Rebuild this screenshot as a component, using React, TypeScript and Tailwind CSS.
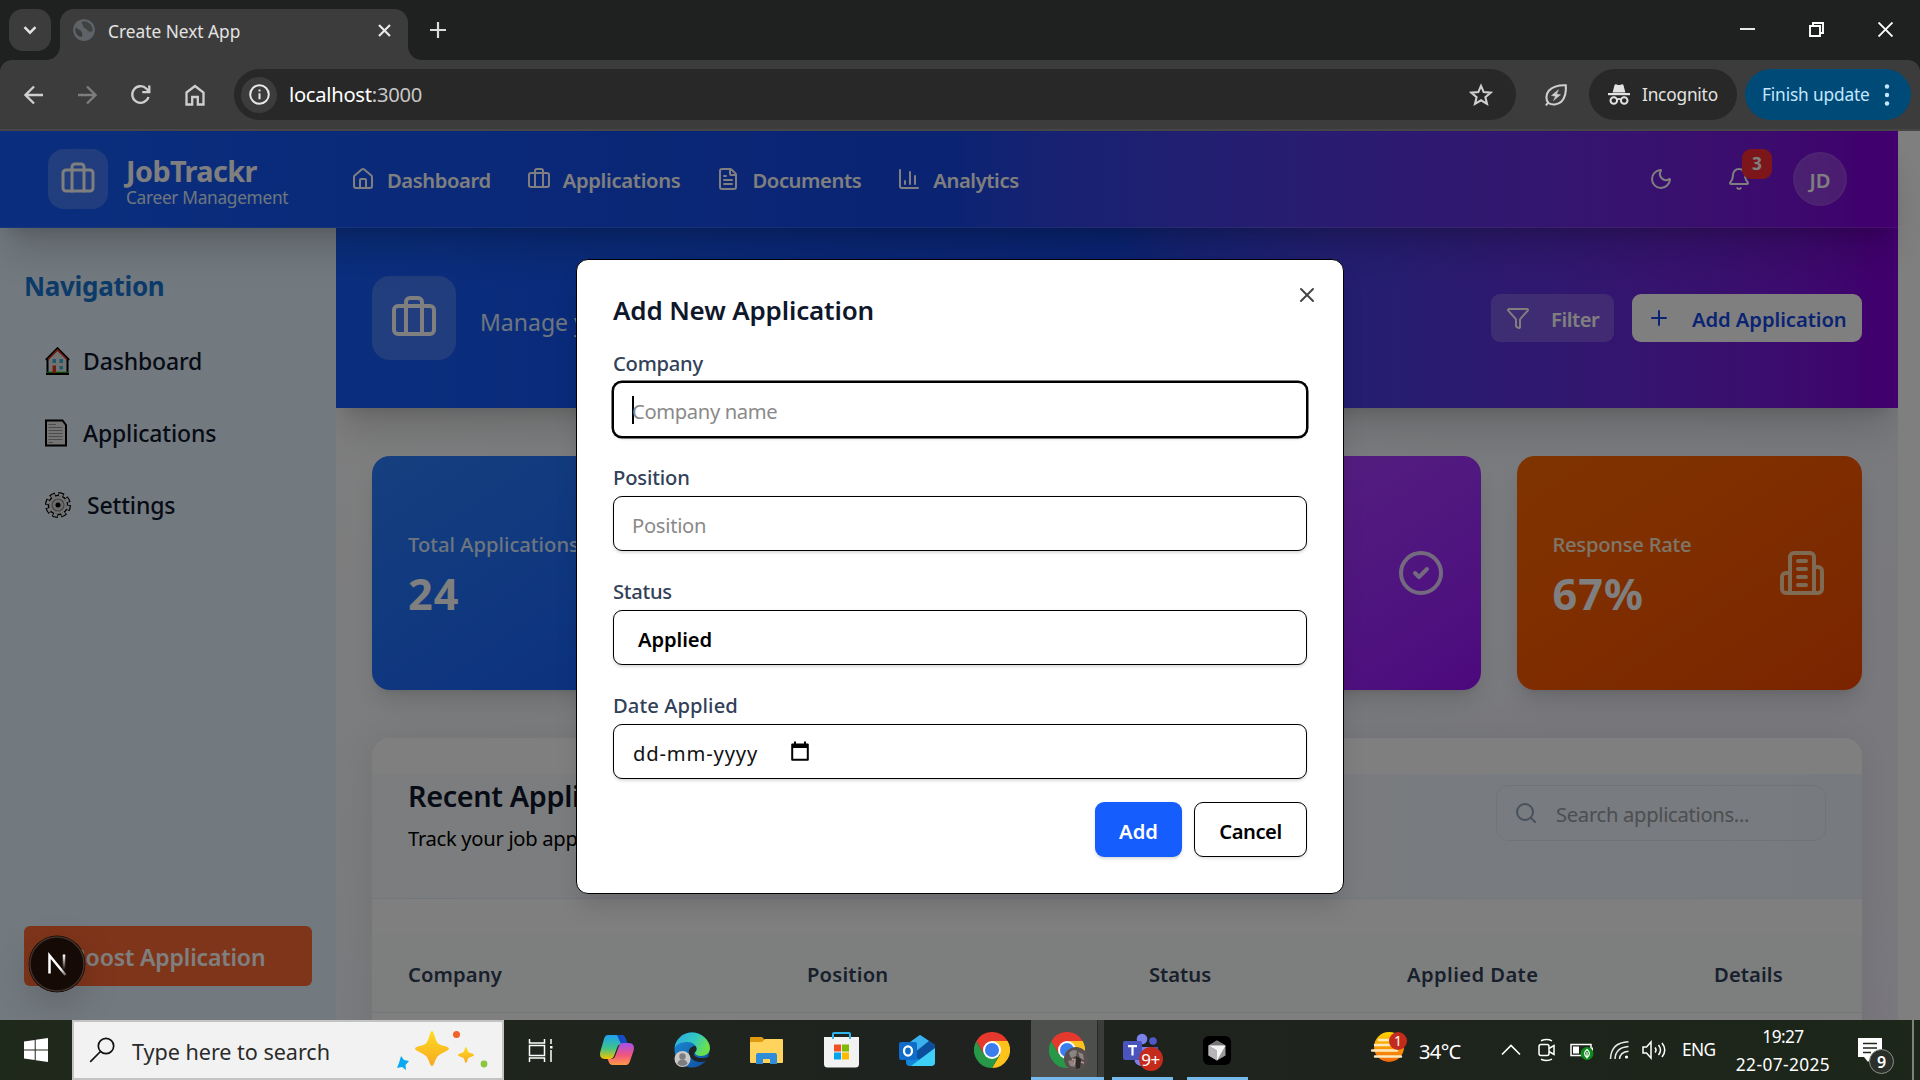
import type { ReactNode } from "react";
import {
  Bell,
  Briefcase,
  ChartColumn,
  CircleCheck,
  FileText,
  Funnel,
  House,
  Moon,
  Plus,
  Search,
  X,
} from "lucide-react";

/* ---------- Browser window ---------- */

function TabStrip() {
  return (
    <div className="flex h-[60px] bg-[#1f2020] pt-[9px] pl-[9px]">
      <div className="flex h-[42px] w-[42px] items-center justify-center rounded-[14px] bg-[#3c3c3c]">
        <svg className="size-[14px]" viewBox="0 0 14 14" fill="none" stroke="#e3e3e3" strokeWidth="2.4">
          <path d="M1.5 4.2 7 9.7l5.500-5.500" />
        </svg>
      </div>
      <div className="relative ml-[9px] flex h-[51px] w-[348px] items-start rounded-t-[14px] bg-[#3c3c3c] pt-[10px] pl-[13px]">
        <svg className="absolute bottom-0 -left-[14px] size-[14px]" viewBox="0 0 14 14" fill="#3c3c3c">
          <path d="M14 0v14H0A14 14 0 0 0 14 0Z" />
        </svg>
        <svg className="absolute -right-[14px] bottom-0 size-[14px]" viewBox="0 0 14 14" fill="#3c3c3c">
          <path d="M0 0v14h14A14 14 0 0 1 0 0Z" />
        </svg>
        <svg className="size-[22px]" viewBox="0 0 22 22">
          <circle cx="11" cy="11" r="10.500" fill="#5f6368" />
          <path d="M3 8c1 3 4 2 5 4s2 3 1 6c-3 0-7-3-7-8Z" fill="#3c3c3c" />
          <path d="M9 2c-1 3 1 3 1 5s3 2 4 4 4 2 6 1c0-5-3-9-8-10-1 0-2 0-3 0Z" fill="#3c3c3c" opacity=".85" />
          <circle cx="11" cy="11" r="9.800" fill="none" stroke="#5f6368" strokeWidth="2" />
        </svg>
        <span className="ml-[13px] w-[270px] pt-px text-[17.3px] leading-[24px] text-[#e3e3e3]">Create Next App</span>
        <svg className="mt-[5px] size-[13px] shrink-0" viewBox="0 0 13 13" stroke="#e8e8e8" strokeWidth="2.200">
          <path d="m1 1 11 11M12 1 1 12" />
        </svg>
      </div>
      <svg className="mt-[13px] ml-[22px] size-[16px]" viewBox="0 0 16 16" stroke="#dcdcdc" strokeWidth="2.200">
        <path d="M8 0v16M0 8h16" />
      </svg>
      <div className="mr-[27px] ml-auto flex gap-[54px] pt-[13px]">
        <svg className="size-[15px]" viewBox="0 0 15 15" stroke="#fff" strokeWidth="1.800">
          <path d="M0 7h15" />
        </svg>
        <svg className="size-[15px]" viewBox="0 0 15 15" fill="none" stroke="#fff" strokeWidth="1.900">
          <path d="M1 4h10v10H1zM4 4V1h10v10h-3" />
        </svg>
        <svg className="size-[15px]" viewBox="0 0 15 15" stroke="#fff" strokeWidth="1.900">
          <path d="m.5.5 14 14M14.500.5l-14 14" />
        </svg>
      </div>
    </div>
  );
}

function Toolbar() {
  return (
    <div className="bg-[#1f2020]">
      <div className="flex h-[71px] items-center rounded-t-[12px] border-b-2 border-[#464646] bg-[#3c3c3c] pl-[24px]">
        <svg className="size-[20px]" viewBox="0 0 20 20" fill="none" stroke="#cfcfcf" strokeWidth="2.300">
          <path d="M19 10H2M10 1.500 1.500 10l8.500 8.500" />
        </svg>
        <svg className="ml-[33px] size-[20px]" viewBox="0 0 20 20" fill="none" stroke="#7d7d7d" strokeWidth="2.300">
          <path d="M1 10h17M10 1.500l8.500 8.500-8.500 8.500" />
        </svg>
        <svg className="ml-[33px] size-[21px]" viewBox="0 0 21 21" fill="none" stroke="#cfcfcf" strokeWidth="2.300">
          <path d="M18.500 13a8.300 8.300 0 1 1-2-8.300L19 7.400" />
          <path d="M19.300 1.500v6.700h-7" />
        </svg>
        <svg className="ml-[33px] size-[22px]" viewBox="0 0 22 22" fill="none" stroke="#cfcfcf" strokeWidth="2.300">
          <path d="M2.500 8.500 11 2l8.500 6.500V20.500h-5.700v-7.500H8.200v7.500H2.500Z" />
        </svg>
        <div className="ml-[28px] flex h-[51px] w-[1282px] items-center rounded-full bg-[#282828] pl-[7px]">
          <div className="flex size-[36px] items-center justify-center rounded-full bg-[#3c3c3c]">
            <svg className="size-[21px]" viewBox="0 0 21 21" fill="none" stroke="#e8e8e8" strokeWidth="2">
              <circle cx="10.500" cy="10.500" r="9.300" />
              <path d="M10.500 9.300v6M10.500 5.500v2" />
            </svg>
          </div>
          <span className="ml-[12px] pb-px text-[20.2px] leading-[28px] tracking-[-0.014em] text-[#c7c7c7]">
            <span className="text-white">localhost</span>:3000
          </span>
          <svg className="mr-[23px] ml-auto size-[24px]" viewBox="0 0 24 24" fill="none" stroke="#cfcfcf" strokeWidth="2.100">
            <path d="m12 2.800 2.700 6.300 6.900.6-5.200 4.500 1.600 6.700-6-3.600-6 3.600 1.600-6.700-5.200-4.500 6.900-.6Z" />
          </svg>
        </div>
        <svg className="ml-[28px] size-[24px]" viewBox="0 0 24 24" fill="none" stroke="#cfcfcf" strokeWidth="2.100">
          <path d="M2 22.500c1-2 2-2.500 2.500-2.500m0 0C1.500 17 1.800 11 5 7.500S14 2 21.800 2.200c.6 7.800-.8 12.800-4.300 16.300s-9.500 4-13 1.500Z" />
          <path d="m14.500 6.800-7 5.700 4 .8-2 4.200 7-5.700-4-.8Z" fill="#cfcfcf" strokeWidth=".5" />
        </svg>
        <div className="ml-[21px] flex h-[51px] w-[148px] items-center rounded-full bg-[#282828] pl-[19px]">
          <svg className="size-[22px]" viewBox="0 0 22 22" fill="#e3e3e3">
            <path d="M6.500 1.200c.3-1 1.200-1.200 2-.8l1.700.7c.5.200 1.100.2 1.600 0l1.700-.7c.8-.4 1.700-.2 2 .8L17.400 8.500H4.600Z" />
            <path d="M0 9h22v2.200H0z" />
            <circle cx="5.800" cy="16.500" r="3.300" fill="none" stroke="#e3e3e3" strokeWidth="2" />
            <circle cx="16.200" cy="16.500" r="3.300" fill="none" stroke="#e3e3e3" strokeWidth="2" />
            <path d="M9 15.500q2-1.300 4 0" fill="none" stroke="#e3e3e3" strokeWidth="1.800" />
          </svg>
          <span className="ml-[12px] text-[17.3px] leading-[24px] tracking-[-0.012em] text-[#e3e3e3]">Incognito</span>
        </div>
        <div className="ml-[8px] flex h-[51px] w-[166px] items-center rounded-full bg-[#004a77] pl-[17px]">
          <span className="w-[121px] text-[17.3px] leading-[24px] tracking-[-0.009em] text-[#c2e7ff]">Finish update</span>
          <svg className="h-[22px] w-[8px]" viewBox="0 0 8 22" fill="#c2e7ff">
            <circle cx="4" cy="2.500" r="2.200" />
            <circle cx="4" cy="11" r="2.200" />
            <circle cx="4" cy="19.500" r="2.200" />
          </svg>
        </div>
      </div>
    </div>
  );
}

/* ---------- JobTrackr page ---------- */

const navLinks = [
  { label: "Dashboard", icon: House, text: "tracking-[-0.020em]" },
  { label: "Applications", icon: Briefcase, text: "tracking-[-0.015em]" },
  { label: "Documents", icon: FileText, text: "tracking-[-0.020em]" },
  { label: "Analytics", icon: ChartColumn, text: "tracking-[-0.020em]" },
];

function Header() {
  return (
    <header className="relative z-10 flex h-[97px] shrink-0 items-center border-b border-white/10 bg-linear-to-r from-blue-600 via-blue-700 to-purple-700 pl-[48px] text-white shadow-[0_30px_38px_-8px_rgba(0,0,0,0.17),0_12px_15px_-9px_rgba(0,0,0,0.15)]">
      <div className="flex size-[60px] items-center justify-center rounded-[16px] bg-white/20">
        <Briefcase className="size-[36px]" />
      </div>
      <div className="ml-[18px] flex w-[225px] flex-col pt-[8px] whitespace-nowrap">
        <span className="text-[28.8px] leading-[30px] font-bold tracking-[-0.020em]">JobTrackr</span>
        <span className="text-[17.3px] leading-[24px] tracking-[-0.018em] text-blue-100">Career Management</span>
      </div>
      <nav className="flex gap-[36px]">
        {navLinks.map(({ label, icon: Icon, text }) => (
          <a key={label} className="flex items-center gap-[12px]">
            <Icon className="size-[24px]" />
            <span className={`pt-[2px] text-[20.2px] leading-[28px] font-semibold ${text}`}>{label}</span>
          </a>
        ))}
      </nav>
      <div className="mr-[51px] ml-auto flex items-center">
        <Moon className="size-[24px]" />
        <div className="relative ml-[54px]">
          <Bell className="size-[24px]" />
          <span className="absolute -top-[18px] left-[15px] flex size-[30px] items-center justify-center rounded-[9px] bg-red-500 text-[17.3px] leading-none font-bold">
            3
          </span>
        </div>
        <div className="ml-[42px] flex size-[54px] items-center justify-center rounded-full border-2 border-white/5 bg-white/20 pt-[2px] text-[20.2px] font-semibold">
          JD
        </div>
      </div>
    </header>
  );
}

function HouseEmoji() {
  return (
    <svg className="h-[28px] w-[25px]" viewBox="0 0 25 28">
      <path d="M2.500 12 12.500 2l10 10v14h-20Z" fill="#e6e6e6" stroke="#000" strokeWidth="2" />
      <path d="m1 13 11.500-11.500L24 13" fill="none" stroke="#000" strokeWidth="2.400" />
      <path d="m3 12.500 9.500-9.500 9.500 9.500" fill="none" stroke="#e03a20" strokeWidth="1.600" />
      <path d="M7.500 12h3.500v4H7.500zM14.500 12H18v4h-3.500zM14.500 19H18v3.500h-3.500z" fill="#32b8dc" />
      <path d="M7.500 18.500H11V26H7.500z" fill="#e03a20" />
      <path d="M2 24.700h5.500v1.500H2zM11 24.700h12v1.500H11z" fill="#10a010" />
      <path d="M1 27h23" stroke="#000" strokeWidth="2" />
    </svg>
  );
}

function PageEmoji() {
  return (
    <svg className="h-[28px] w-[22px]" viewBox="0 0 22 28">
      <path d="M1 1.500h16.500L21 6v20.500H1Z" fill="#e8e8e8" stroke="#000" strokeWidth="2" />
      <path d="M3.500 5.500H11M3.500 8.500h14M3.500 11.500h14M3.500 14.500h14M3.500 17.500h14M3.500 20.500h14M3.500 23.500H8" stroke="#999" strokeWidth="1.200" />
    </svg>
  );
}

function GearEmoji() {
  return (
    <svg className="size-[26px]" viewBox="0 0 26 26">
      <circle cx="13" cy="13" r="11" fill="none" stroke="#000" strokeWidth="4" strokeDasharray="5.500 3.140" />
      <circle cx="13" cy="13" r="9.600" fill="#e4e4e4" stroke="#000" strokeWidth="1.400" />
      <circle cx="13" cy="13" r="10.200" fill="none" stroke="#e4e4e4" strokeWidth="3.200" strokeDasharray="3.800 4.211" strokeDashoffset="-.65" />
      <circle cx="13" cy="13" r="6" fill="#d4d4d4" stroke="#888" strokeWidth="1.200" />
      <circle cx="13" cy="13" r="2.500" fill="#000" />
    </svg>
  );
}

function SideItem({ icon, children, box }: { icon: ReactNode; children: string; box: string }) {
  return (
    <a className="flex h-[72px] items-center text-[#0f172a]">
      <span className={box}>{icon}</span>
      <span className="text-[23px] leading-[30px] font-medium tracking-[-0.007em]">{children}</span>
    </a>
  );
}

function Sidebar() {
  return (
    <aside className="flex w-[336px] flex-col bg-[#e4f3ff] px-[24px] pt-[40px] pb-[34px]">
      <h2 className="text-[26px] leading-[36px] font-bold tracking-[-0.012em] text-[#1976d2]">Navigation</h2>
      <div className="mt-[21px] flex flex-col pl-[21px]">
        <SideItem icon={<HouseEmoji />} box="w-[38px]">Dashboard</SideItem>
        <SideItem icon={<PageEmoji />} box="w-[38px]">Applications</SideItem>
        <SideItem icon={<GearEmoji />} box="w-[42px]">Settings</SideItem>
      </div>
      <button className="mt-auto flex h-[60px] items-center justify-center rounded-[6px] bg-[#ff6b35] pt-[2px] text-[23px] font-semibold tracking-[-0.006em] text-white">
        Boost Application
      </button>
    </aside>
  );
}

function Hero() {
  return (
    <section className="flex h-[180px] shrink-0 items-center bg-linear-to-r from-blue-600 via-blue-700 to-purple-700 px-[36px] text-white shadow-[0_30px_38px_-8px_rgba(0,0,0,0.14),0_12px_15px_-9px_rgba(0,0,0,0.14)]">
      <div className="flex size-[84px] items-center justify-center rounded-[18px] bg-white/20">
        <Briefcase className="size-[48px]" />
      </div>
      <p className="ml-[24px] pt-[8px] text-[23px] leading-[36px] whitespace-nowrap text-blue-100">
        Manage your applications
      </p>
      <div className="ml-auto flex gap-[18px] text-[20.2px] font-semibold">
        <button className="flex h-[48px] w-[123px] items-center rounded-[9px] bg-white/20 pl-[15px]">
          <Funnel className="size-[24px]" />
          <span className="ml-[21px] pt-[2px] tracking-[-0.022em]">Filter</span>
        </button>
        <button className="flex h-[48px] w-[230px] items-center rounded-[9px] bg-white pl-[15px] text-blue-700">
          <Plus className="size-[24px]" />
          <span className="ml-[21px] pt-[2px] whitespace-nowrap tracking-[-0.003em]">Add Application</span>
        </button>
      </div>
    </section>
  );
}

function OfficeBuilding({ className }: { className: string }) {
  return (
    <svg className={className} viewBox="0 0 24 24" fill="none" stroke="currentColor" strokeWidth="2" strokeLinecap="round" strokeLinejoin="round">
      <path d="M6 22V4a2 2 0 0 1 2-2h8a2 2 0 0 1 2 2v18Z" />
      <path d="M6 12H4a2 2 0 0 0-2 2v6a2 2 0 0 0 2 2h2" />
      <path d="M18 9h2a2 2 0 0 1 2 2v9a2 2 0 0 1-2 2h-2" />
      <path d="M10 6h4M10 10h4M10 14h4M10 18h4" />
    </svg>
  );
}

type StatProps = { label: string; value: string; card: string; tint: string; icon: ReactNode };

function StatCard({ label, value, card, tint, icon }: StatProps) {
  return (
    <div className={`flex h-[234px] items-center justify-between rounded-[18px] bg-linear-to-br px-[36px] shadow-[0_15px_23px_-4px_rgba(0,0,0,0.12),0_6px_9px_-6px_rgba(0,0,0,0.12)] ${card}`}>
      <div className="flex flex-col gap-[8px] pt-[4px]">
        <span className={`text-[20.2px] leading-[30px] font-medium whitespace-nowrap ${tint}`}>{label}</span>
        <span className="text-[43.2px] leading-[54px] font-bold tracking-[0.025em] text-white">{value}</span>
      </div>
      {icon}
    </div>
  );
}

function Stats() {
  return (
    <div className="grid grid-cols-4 gap-[36px]">
      <StatCard label="Total Applications" value="24" card="from-blue-500 to-blue-600" tint="text-blue-100" icon={<Briefcase className="size-[48px] text-blue-200" />} />
      <StatCard label="Interviews" value="8" card="from-green-500 to-green-600" tint="text-green-100" icon={<FileText className="size-[48px] text-green-200" />} />
      <StatCard label="Offers" value="3" card="from-purple-500 to-purple-600" tint="text-purple-100" icon={<CircleCheck className="size-[48px] text-purple-200" />} />
      <StatCard label="Response Rate" value="67%" card="from-orange-500 to-orange-600" tint="text-orange-100 tracking-[-0.012em]" icon={<OfficeBuilding className="size-[48px] text-orange-200" />} />
    </div>
  );
}

function RecentApplications() {
  return (
    <section className="mt-[48px] flex h-[400px] flex-col rounded-t-[18px] bg-white pt-[36px] shadow-[0_0_38px_0_rgba(0,0,0,0.08)]">
      <div className="flex h-[125px] items-start justify-between border-b border-slate-200/70 bg-linear-to-r from-slate-50 to-blue-50 px-[36px]">
        <div className="flex flex-col gap-[9px] pt-[4px] whitespace-nowrap">
          <h3 className="text-[28.8px] leading-[36px] font-semibold tracking-[-0.012em] text-slate-900">Recent Applications</h3>
          <p className="text-[20.2px] leading-[30px] tracking-[-0.015em] text-black">Track your job applications</p>
        </div>
        <div className="mt-[11px] flex h-[56px] w-[330px] items-center rounded-[12px] border border-slate-300/40 pl-[17px]">
          <Search className="size-[24px] text-slate-400" />
          <span className="ml-[18px] pt-[2px] text-[20.2px] tracking-[-0.015em] text-[#9b9ca0]">Search applications...</span>
        </div>
      </div>
      <div className="mt-[35px] grid h-[79px] grid-cols-[399px_342px_258px_307px_1fr] items-center border-b border-slate-200/70 bg-slate-50/60 pt-[3px] pl-[36px] text-[20.2px] font-semibold text-slate-700">
        <span className="tracking-[0.005em]">Company</span>
        <span className="tracking-[0.010em]">Position</span>
        <span>Status</span>
        <span className="tracking-[0.020em]">Applied Date</span>
        <span className="tracking-[0.005em]">Details</span>
      </div>
    </section>
  );
}

/* ---------- Dialog ---------- */

const fieldBox =
  "flex h-[55px] w-full items-center rounded-[9px] border border-black bg-white px-[18px] pt-[3px] shadow-[0_1.5px_3px_rgba(0,0,0,0.14)]";

function Field({ label, tracking, children }: { label: string; tracking: string; children: ReactNode }) {
  return (
    <div className="flex flex-col gap-[4px]">
      <span className={`text-[20.2px] leading-[29px] font-medium text-slate-700 ${tracking}`}>{label}</span>
      {children}
    </div>
  );
}

function AddApplicationDialog() {
  return (
    <div className="relative flex h-[635px] w-[768px] flex-col rounded-[12px] border border-black bg-white px-[36px] pt-[35px] text-[20.2px] shadow-[0_15px_23px_-4px_rgba(0,0,0,0.14)]">
      <X className="absolute top-[23px] right-[24px] size-[24px] text-[#444]" />
      <h2 className="text-[26px] leading-[30px] font-semibold tracking-[-0.006em] text-slate-900">Add New Application</h2>
      <div className="mt-[24px] flex flex-col gap-[26px]">
        <Field label="Company" tracking="tracking-[-0.012em]">
          <div className={`${fieldBox} ring-[1.5px] ring-black`}>
            <span className="-mt-[3px] h-[28px] w-[2px] bg-black" />
            <span className="-ml-[2px] tracking-[-0.018em] text-[#8a8a8a]">Company name</span>
          </div>
        </Field>
        <Field label="Position" tracking="tracking-[-0.008em]">
          <div className={fieldBox}>
            <span className="tracking-[-0.014em] text-[#8a8a8a]">Position</span>
          </div>
        </Field>
        <Field label="Status" tracking="tracking-[-0.014em]">
          <div className={fieldBox}>
            <span className="pl-[6px] font-semibold tracking-[-0.004em] text-black">Applied</span>
          </div>
        </Field>
        <Field label="Date Applied" tracking="tracking-[0.003em]">
          <div className={fieldBox}>
            <span className="pl-[1px] tracking-[0.041em] text-[#111]">dd-mm-yyyy</span>
            <svg className="-mt-[5px] ml-[33px] h-[20px] w-[18px]" viewBox="0 0 18 20">
              <path d="M1.200 3.500h15.600v15.300H1.200Z" fill="none" stroke="#000" strokeWidth="2" strokeLinejoin="round" />
              <path d="M1 3h16v4H1zM3 .5h2V4H3zM13 .5h2V4h-2z" />
            </svg>
          </div>
        </Field>
      </div>
      <div className="mt-[23px] flex justify-end gap-[12px] font-semibold">
        <button className="flex h-[55px] w-[87px] items-center justify-center rounded-[9px] bg-blue-600 pt-[3px] text-white shadow-[0_1.5px_3px_rgba(0,0,0,0.14)]">Add</button>
        <button className="flex h-[55px] w-[113px] items-center justify-center rounded-[9px] border border-black bg-white pt-[3px] tracking-[-0.024em] text-black shadow-[0_1.5px_3px_rgba(0,0,0,0.1)]">
          Cancel
        </button>
      </div>
    </div>
  );
}

function NextBadge() {
  return (
    <svg className="absolute top-[804px] left-[28px] size-[58px] rounded-full shadow-[0_12px_36px_rgba(0,0,0,0.17)]" viewBox="0 0 58 58" fill="none">
      <defs>
        <linearGradient id="nDiag" x1="22" y1="20" x2="39" y2="43" gradientUnits="userSpaceOnUse">
          <stop offset=".6" stopColor="#fff" />
          <stop offset="1" stopColor="#fff" stopOpacity=".1" />
        </linearGradient>
        <linearGradient id="nStem" x1="36" y1="20" x2="36" y2="35" gradientUnits="userSpaceOnUse">
          <stop stopColor="#fff" />
          <stop offset="1" stopColor="#fff" stopOpacity="0" />
        </linearGradient>
      </defs>
      <circle cx="29" cy="29" r="28.500" fill="#150a05" />
      <circle cx="29" cy="29" r="27" stroke="#42302a" strokeWidth="1.500" />
      <path d="M21.500 38.500V20.500L37.500 40" stroke="url(#nDiag)" strokeWidth="2.500" />
      <path d="M36 19.500v15" stroke="url(#nStem)" strokeWidth="2.500" />
    </svg>
  );
}

function WebPage() {
  return (
    <div className="relative h-[889px] overflow-hidden bg-white">
      <div className="flex h-[889px] w-[1898px] flex-col">
        <Header />
        <div className="flex min-h-0 grow">
          <Sidebar />
          <main className="flex w-[1562px] flex-col overflow-hidden bg-linear-to-br from-white via-[#f3f6fb] to-[#f3f0fb]">
            <Hero />
            <div className="px-[36px] pt-[48px]">
              <Stats />
              <RecentApplications />
            </div>
          </main>
        </div>
      </div>
      <div className="absolute inset-0 z-20 flex items-start justify-center bg-black/50 pt-[128px]">
        <AddApplicationDialog />
        <NextBadge />
      </div>
    </div>
  );
}

/* ---------- Windows taskbar ---------- */

function Sparkles() {
  return (
    <svg className="h-[44px] w-[92px]" viewBox="0 0 92 44">
      <defs>
        <linearGradient id="gold" x1="0" y1="0" x2="0" y2="1">
          <stop stopColor="#ffdc1e" />
          <stop offset="1" stopColor="#f7a823" />
        </linearGradient>
      </defs>
      <path d="M35 3c2 0 3 9 5.500 12S52 18 52 20.500 43 25.500 40.500 28.500 37 38 35 38s-3-6.500-5.500-9.500S18 23 18 20.500s9-2.500 11.500-5.500S33 3 35 3Z" fill="url(#gold)" />
      <path d="M69 19c1 0 1.500 4 2.500 5s5.500 1.500 5.500 3-4.500 2-5.500 3-1.500 5-2.500 5-1.500-4-2.500-5-5.500-1.500-5.500-3 4.500-2 5.500-3 1.500-5 2.500-5Z" fill="url(#gold)" />
      <path d="m4 28 3 4 5 1-3.500 4 .5 5-4-3-5 1 2-5Z" fill="#08a9f0" />
      <circle cx="59.500" cy="6.500" r="3.500" fill="#f1622a" />
      <circle cx="87" cy="36" r="3.400" fill="#8cc63f" />
    </svg>
  );
}

function Copilot() {
  return (
    <svg className="h-[32px] w-[36px]" viewBox="0 0 36 32">
      <defs>
        <linearGradient id="cpA" x1="0" y1="0" x2="0" y2="1">
          <stop stopColor="#1fa2f0" />
          <stop offset=".55" stopColor="#3fc38a" />
          <stop offset="1" stopColor="#f5c400" />
        </linearGradient>
        <linearGradient id="cpB" x1="0" y1="0" x2="0" y2="1">
          <stop stopColor="#a450ee" />
          <stop offset=".55" stopColor="#f2557e" />
          <stop offset="1" stopColor="#ff9a45" />
        </linearGradient>
      </defs>
      <path d="M9 1h13c3 0 4 2 5 5l1 4h-5c-3 0-4 1-5 4l-3 8c-1 2-2 3-4 3H6c-4 0-6-3-4.500-8L5 5c.8-2.500 2-4 4-4Z" fill="url(#cpA)" />
      <path d="M18 1h4c3 0 4 2 5 5l1 4h-6Z" fill="#1648c8" />
      <path d="M27 31H14c-3 0-4-2-5-5l-.500-1H12c3 0 4-2 5-5l3-8c1-2 2-3 4-3h6c4 0 6 3 4.500 8L31 27c-.8 2.500-2 4-4 4Z" fill="url(#cpB)" />
    </svg>
  );
}

function Edge() {
  return (
    <svg className="size-[36px]" viewBox="0 0 36 36">
      <defs>
        <linearGradient id="edA" x1="0" y1="0" x2="1" y2=".4">
          <stop stopColor="#2aa9e6" />
          <stop offset=".6" stopColor="#33c9c0" />
          <stop offset="1" stopColor="#6be04a" />
        </linearGradient>
        <linearGradient id="edB" x1="0" y1="0" x2="1" y2="1">
          <stop stopColor="#1b8fd8" />
          <stop offset="1" stopColor="#0f4a9c" />
        </linearGradient>
      </defs>
      <circle cx="18" cy="18" r="17.500" fill="url(#edB)" />
      <path d="M.5 16C1.500 7 9 .5 18 .5S36 8 36 16c0 5-4 8-9 8-4 0-6-1.500-6-3 0-1 1.500-1.500 1.500-4 0-4-4-7-9-7-6 0-11 2-13 6Z" fill="url(#edA)" />
      <path d="M21 14c-4 0-7 4-6 8s5 8 11 8c4 0 7-1.500 8-2.500L36 24c-3 2-6 2-9 2-4 0-7-2-7-4s2.500-2 2.500-5c0-1.500-.5-3-1.500-3Z" fill="#1f2321" />
      <circle cx="8.500" cy="27" r="8" fill="#c9c9c9" />
      <circle cx="8.500" cy="24.500" r="3.200" fill="#7d7d7d" />
      <path d="M3.500 32a5 4.500 0 0 1 10 0 8 8 0 0 1-10 0Z" fill="#7d7d7d" />
    </svg>
  );
}

function Explorer() {
  return (
    <svg className="h-[28px] w-[33px]" viewBox="0 0 33 28">
      <path d="M0 2q0-1 1-1h11l3 3v4H0Z" fill="#e09a10" />
      <path d="M0 6h12l3-3h17q1 0 1 1v22q0 1-1 1H1q-1 0-1-1Z" fill="#ffd35c" />
      <path d="M6 19q0-2 2-2h17q2 0 2 2v9h-7v-5h-7v5H6Z" fill="#2f8cd8" />
    </svg>
  );
}

function Store() {
  return (
    <svg className="h-[36px] w-[35px]" viewBox="0 0 35 36">
      <path d="M9 8V2q0-1 1-1h15q1 0 1 1v6" fill="none" stroke="#2fb4ee" strokeWidth="2" />
      <path d="M0 5h35v27q0 3.500-3.500 3.500h-28Q0 35.500 0 32Z" fill="#f2f2f2" />
      <path d="M9 7V5M26 7V5" stroke="#2fb4ee" strokeWidth="2" />
      <path d="M10 12.500h7v7h-7z" fill="#f25022" />
      <path d="M18 12.500h7v7h-7z" fill="#7fba00" />
      <path d="M10 20.500h7v7h-7z" fill="#00a4ef" />
      <path d="M18 20.500h7v7h-7z" fill="#ffb900" />
    </svg>
  );
}

function Outlook() {
  return (
    <svg className="h-[31px] w-[37px]" viewBox="0 0 37 31">
      <path d="M7 10 21 0l15 10v17q0 4-4 4H11q-4 0-4-4Z" fill="#1487dc" />
      <path d="M21 0l9 6-14 11-9-7Z" fill="#3bb2ee" />
      <path d="m30 6 6 4v4L20 25l-6-6Z" fill="#0b4f9c" />
      <path d="M36 13v14q0 4-4 4H12Z" fill="#3fd0f7" />
      <rect y="7" width="18" height="18" rx="2" fill="#0f6cc8" />
      <ellipse cx="9" cy="16" rx="4" ry="4.600" fill="none" stroke="#fff" strokeWidth="2.300" />
    </svg>
  );
}

function Chrome() {
  return (
    <svg className="size-[36px]" viewBox="0 0 36 36">
      <path d="M18 9h15.600A18 18 0 0 1 18 36l8-13.500Z" fill="#fdc21c" />
      <path d="M2.400 9A18 18 0 0 0 18 36l7.800-13.500L18 18l-7.800 4.500Z" fill="#279847" />
      <path d="M18 9h15.600A18 18 0 0 0 2.400 9l7.800 13.500L18 18Z" fill="#e5392d" />
      <circle cx="18" cy="18" r="9" fill="#fff" />
      <circle cx="18" cy="18" r="7" fill="#3b7ded" />
    </svg>
  );
}

function ActiveChrome() {
  return (
    <div className="relative size-[36px]">
      <Chrome />
      <svg className="absolute top-[15px] left-[15px] size-[24px]" viewBox="0 0 24 24">
        <circle cx="12" cy="12" r="12" fill="#57504e" />
        <path d="M5 6q4-5 8-2l-1 5-5 2ZM14 5l5 2 1 6-4-2ZM4 14l5-1 2 7-5-1Z" fill="#8d8481" />
        <path d="m12 9 5 3-1 9-4 1Z" fill="#2c2826" />
        <path d="m8 12 3 1-1 5M17 15l3 1" stroke="#b89a95" strokeWidth="1.500" fill="none" />
      </svg>
    </div>
  );
}

function Teams() {
  return (
    <div className="relative h-[36px] w-[40px]">
      <svg className="h-[36px] w-[38px]" viewBox="0 0 38 36">
        <circle cx="19" cy="7" r="5.300" fill="#7b83eb" />
        <circle cx="30" cy="9" r="3.800" fill="#5059c9" />
        <path d="M24 15h11v9q-2 8-9 7Z" fill="#5059c9" />
        <path d="M11 15h16v11q-1 8-8 8t-8-8Z" fill="#7b83eb" />
        <rect y="9" width="19" height="19" rx="2" fill="#4b53bc" />
        <path d="M5 14.200h9M9.500 14v9.500" stroke="#fff" strokeWidth="2.200" />
      </svg>
      <span className="absolute top-[15px] left-[16px] flex size-[24px] items-center justify-center rounded-full bg-[#c42b1c] text-[17px] leading-none tracking-[-0.03em] text-white">
        9+
      </span>
    </div>
  );
}

function Cursor() {
  return (
    <svg className="h-[29px] w-[28px]" viewBox="0 0 28 29">
      <rect width="28" height="29" rx="6" fill="#000" />
      <path d="m14 4.500 8.500 5v10L14 24.500l-8.500-5v-10Z" fill="#9a9a9a" />
      <path d="m5.500 9.500 8.500-5 8.500 5Z" fill="#777" />
      <path d="M5.500 9.500h17L14 24.500v-10Z" fill="#f4f4f4" />
      <path d="m5.500 9.500 8.500 5v10l-8.500-5Z" fill="#b5b5b5" />
    </svg>
  );
}

function TaskApp({ slot, bar, children }: { slot: string; bar?: string; children: ReactNode }) {
  return (
    <div className={`relative flex h-[60px] items-center justify-center ${slot}`}>
      {children}
      {bar && <span className={`absolute bottom-0 h-[3px] bg-[#76b9ed] ${bar}`} />}
    </div>
  );
}

function Weather() {
  return (
    <div className="relative -mt-[6px] h-[30px] w-[36px]">
      <svg className="h-[30px] w-[36px]" viewBox="0 0 36 30">
        <defs>
          <linearGradient id="sun" x1="0" y1="0" x2="0" y2="1">
            <stop stopColor="#ffd400" />
            <stop offset="1" stopColor="#f2660c" />
          </linearGradient>
        </defs>
        <circle cx="18" cy="15" r="15" fill="url(#sun)" />
        <path d="M8 8h10M4 13h14M1 18.500h25M4 24.500h26" stroke="#fbe9c0" strokeWidth="2.400" strokeLinecap="round" />
      </svg>
      <span className="absolute top-0 left-[18px] flex size-[18px] items-center justify-center rounded-full bg-[#c42b1c] text-[14px] leading-none text-white">
        1
      </span>
    </div>
  );
}

function Tray() {
  return (
    <div className="ml-auto flex shrink-0 items-center text-white">
      <Weather />
      <span className="ml-[12px] w-[82px] pt-[2px] text-[20.2px] tracking-[-0.036em]">34°C</span>
      <svg className="h-[12px] w-[20px]" viewBox="0 0 20 12" fill="none" stroke="#fff" strokeWidth="1.600">
        <path d="m1 10.500 9-9 9 9" />
      </svg>
      <svg className="ml-[17px] h-[24px] w-[18px]" viewBox="0 0 18 24" fill="none" stroke="#fff" strokeWidth="1.500">
        <rect x="1" y="6.500" width="10" height="11" rx="2" />
        <path d="m11 10.500 5-3v9l-5-3M3 2.800q6-2.500 11 0M3 21.200q6 2.500 11 0" />
      </svg>
      <svg className="ml-[14px] h-[20px] w-[25px]" viewBox="0 0 25 20">
        <path d="M1 4.500h20v11H1z" fill="none" stroke="#fff" strokeWidth="1.500" />
        <path d="M3 6.500h6v7H3zM21.500 7.500H23v5h-1.500z" fill="#fff" />
        <circle cx="17" cy="13.500" r="6.500" fill="#0f8a1c" />
        <path d="M17 9.500q5 4 0 8-5-4 0-8ZM17 12v6.500" fill="none" stroke="#fff" strokeWidth="1.200" />
      </svg>
      <svg className="ml-[14px] h-[20px] w-[21px]" viewBox="0 0 21 20" fill="none" stroke="#e8e8e8" strokeWidth="1.500">
        <path d="M1.500 19Q2 2.500 19.500 1.800M6 19Q6.500 7.500 19.500 6.500M10.500 19Q11 12 19.500 11.200" />
        <circle cx="17.500" cy="17" r="1.600" fill="#fff" stroke="none" />
      </svg>
      <svg className="ml-[12px] h-[20px] w-[24px]" viewBox="0 0 24 20" fill="none" stroke="#fff" strokeWidth="1.500">
        <path d="M1 7h3.500L9 2v16l-4.500-5H1Z" />
        <path d="M13 7.500q2 2.500 0 5M16.500 5q4 5 0 10M20 3q5.500 7 0 14" />
      </svg>
      <span className="ml-[16px] w-[54px] text-[17.3px] leading-[24px] tracking-[-0.035em]">ENG</span>
      <div className="flex w-[94px] flex-col items-center pt-px text-[17.3px] leading-[27.500px] whitespace-nowrap">
        <span className="tracking-[-0.033em]">19:27</span>
        <span className="tracking-[0.024em]">22-07-2025</span>
      </div>
      <div className="relative ml-[28px] h-[38px] w-[54px]">
        <svg className="mt-[7px] h-[25px] w-[24px]" viewBox="0 0 24 25">
          <path d="M0 0h24v19H14l-4 5-4-5H0Z" fill="#fff" />
          <path d="M5 5.500h14M5 10h14M5 14.500h8" stroke="#1f271c" strokeWidth="1.300" />
        </svg>
        <span className="absolute top-[18px] left-[11px] flex size-[25px] items-center justify-center rounded-full border border-[#8a8f88] bg-[#2b2f2a] text-[16px] leading-none font-semibold">
          9
        </span>
      </div>
      <span className="mr-[6px] h-[60px] w-[2px] bg-[#7c827a]" />
    </div>
  );
}

function Taskbar() {
  return (
    <div className="flex h-[60px] items-center bg-linear-to-r from-[#1f291b] via-[#1f221f] to-[#1c2619]">
      <div className="flex w-[72px] justify-center">
        <svg className="size-[24px]" viewBox="0 0 24 24" fill="#fff">
          <path d="m0 3.500 10.700-1.500v9.500H0ZM11.700 1.800 24 0v11.500H11.700ZM0 12.500h10.700V22L0 20.500ZM11.700 12.500H24V24l-12.300-1.800Z" />
        </svg>
      </div>
      <div className="flex h-[60px] w-[432px] items-center border-2 border-[#c3c3c3] bg-[#f2f2f2] pl-[15px]">
        <svg className="size-[26px]" viewBox="0 0 26 26" fill="none" stroke="#111" strokeWidth="1.700">
          <circle cx="17" cy="9" r="7.700" />
          <path d="M11.500 14.500 1.200 24.800" />
        </svg>
        <span className="ml-[17px] w-[265px] pt-[4px] text-[21.6px] tracking-[-0.002em] text-[#2b2b2b]">Type here to search</span>
        <Sparkles />
      </div>
      <TaskApp slot="w-[73px]">
        <svg className="h-[25px] w-[26px]" viewBox="0 0 26 25" fill="none" stroke="#fff" strokeWidth="1.500">
          <path d="M1.500 1v4h15V1M1.500 24v-4h15v4M1.500 7.500h15v10h-15zM23 1v5M23 12v12" />
          <path d="M22 8h2.500v2.500H22z" fill="#fff" stroke="none" />
        </svg>
      </TaskApp>
      <TaskApp slot="w-[79px]"><Copilot /></TaskApp>
      <TaskApp slot="w-[72px]"><Edge /></TaskApp>
      <TaskApp slot="w-[76px]"><Explorer /></TaskApp>
      <TaskApp slot="w-[75px]"><Store /></TaskApp>
      <TaskApp slot="w-[76px]"><Outlook /></TaskApp>
      <TaskApp slot="w-[76px] pr-[2px]"><Chrome /></TaskApp>
      <div className="flex h-[60px] w-[73px] bg-[#3b3d3b]">
        <TaskApp slot="w-[67px] bg-[#4d4f4d] border-r border-[#2a2c2a] pl-[6px]" bar="left-0 w-[73px]"><ActiveChrome /></TaskApp>
      </div>
      <TaskApp slot="w-[77px]" bar="left-[8px] w-[61px]"><Teams /></TaskApp>
      <TaskApp slot="w-[72px]" bar="left-[6px] w-[61px]"><Cursor /></TaskApp>
      <Tray />
    </div>
  );
}

export default function App() {
  return (
    <div className="flex h-[1080px] w-[1920px] flex-col overflow-hidden bg-[#1f2020] font-['Noto_Sans',sans-serif]">
      <TabStrip />
      <Toolbar />
      <WebPage />
      <Taskbar />
    </div>
  );
}
